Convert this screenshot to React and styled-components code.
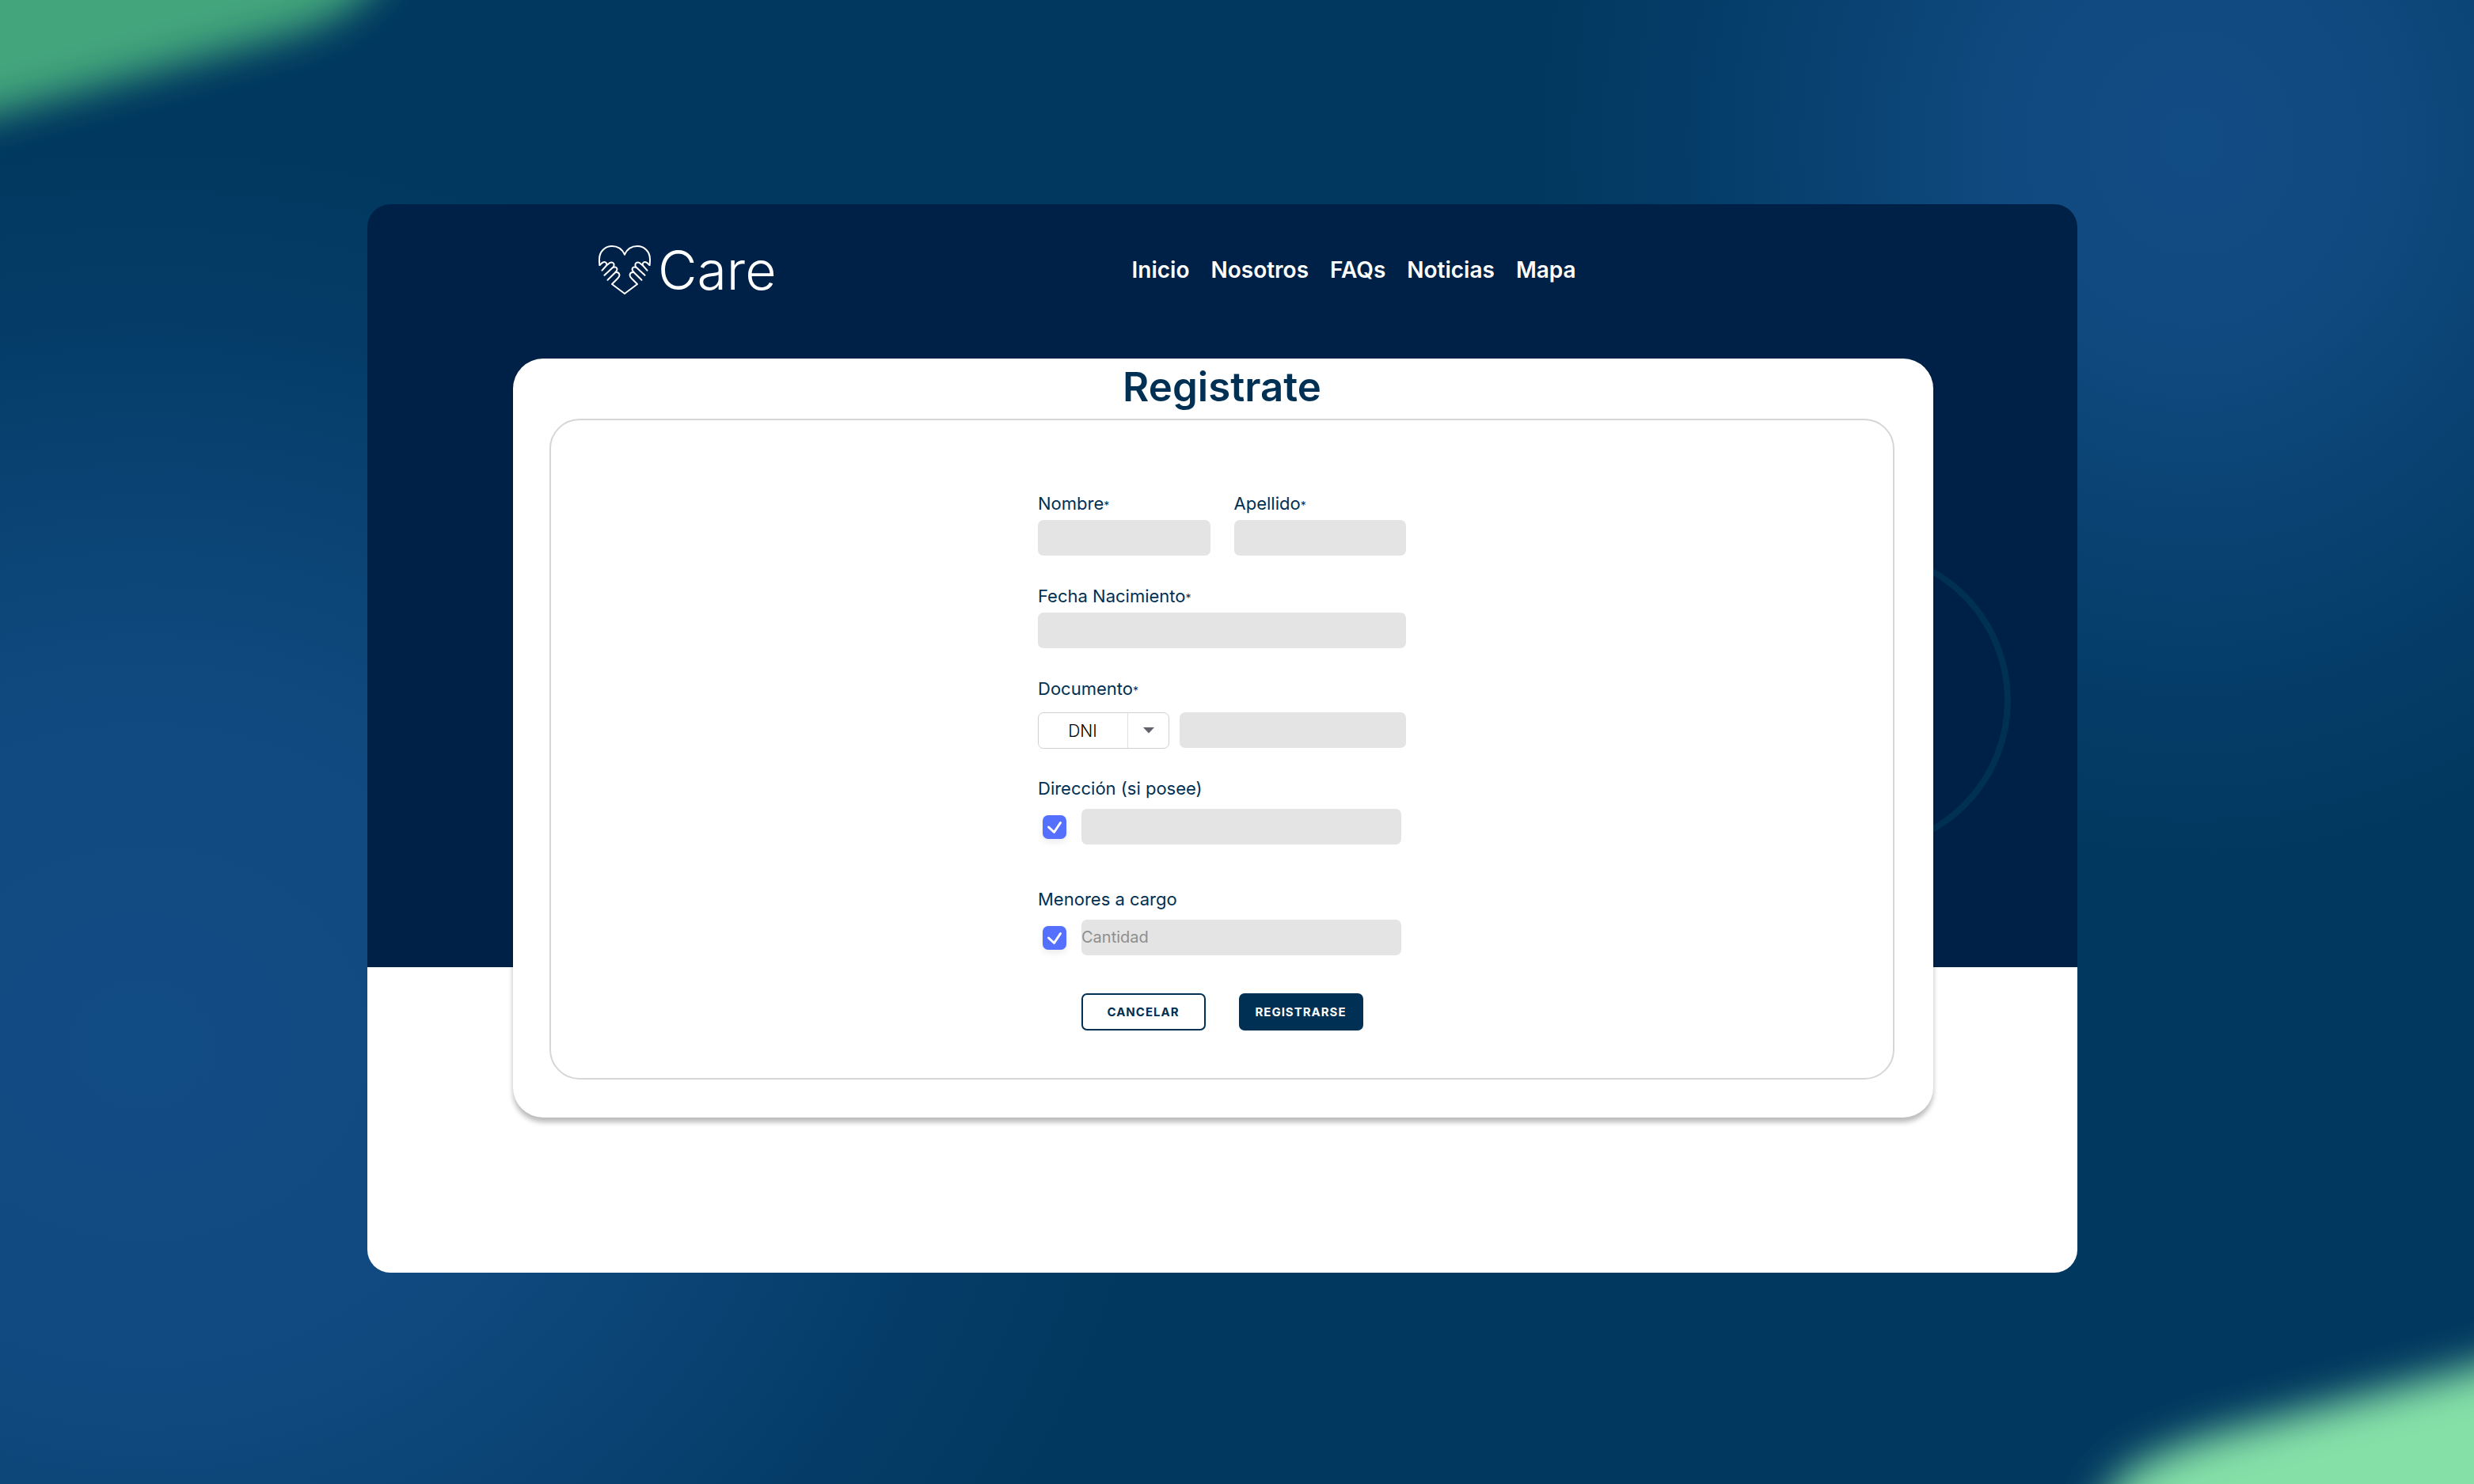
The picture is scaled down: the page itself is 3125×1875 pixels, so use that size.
import React, { useState } from "react";
import styled, { createGlobalStyle } from "styled-components";

const navy = "#003053";
const sans = `Inter, "Liberation Sans", sans-serif`;

const GlobalStyle = createGlobalStyle`
  *, *::before, *::after { box-sizing: border-box; }
  body { margin: 0; font-family: ${sans}; color: ${navy}; }
  button, input, select { font-family: inherit; }
`;

const Page = styled.div`
  position: relative;
  isolation: isolate;
  overflow: hidden;
  display: flex;
  min-height: 100vh;
  padding: 258px 501px 267px 464px;
  background:
    radial-gradient(ellipse 840px 920px at calc(100% - 355px) 180px, #124c84 0, #114b82f0 25%, #114b8299 50%, #114b8233 80%, #114b8200 100%),
    radial-gradient(ellipse 1300px 1150px at 180px 1320px, #124c84 0, #114b82f0 35%, #114b8299 60%, #114b8233 82%, #114b8200 100%),
    #00385f;
`;

const Glow = styled.svg`
  position: absolute;
  z-index: -1;
  ${(p) => (p.$corner === "top" ? "top: 0; left: 0;" : "bottom: 0; right: 0;")}
`;

const Shell = styled.div`
  position: relative;
  flex: 1;
  overflow: hidden;
  border-radius: 29px;
  background: linear-gradient(#002147 964px, #fff 964px);
`;

const Ring = styled.div`
  position: absolute;
  top: 436px;
  right: 84px;
  width: 382px;
  height: 382px;
  border: 8px solid #003053;
  border-radius: 50%;
`;

const Header = styled.header`
  display: flex;
  align-items: center;
  gap: 449px;
  height: 195px;
  padding: 0 0 30px 291px;
`;

const Brand = styled.a`
  display: flex;
  align-items: center;
  gap: 8px;
  color: #fff;
  font-size: 68px;
  font-weight: 300;
  line-height: 72px;
  text-decoration: none;
`;

const Nav = styled.nav`
  display: flex;
  gap: 27px;
`;

const NavLink = styled.a`
  color: #fff;
  font-size: 28px;
  font-weight: 600;
  line-height: 40px;
  text-decoration: none;
`;

const Card = styled.main`
  position: relative;
  margin: 0 182px 0 184px;
  padding: 0 49px 48px 46px;
  border-radius: 38px;
  background: #fff;
  box-shadow: 0 6px 6px rgba(0, 0, 0, 0.27);
`;

const Title = styled.h1`
  margin: 0;
  padding-bottom: 4px;
  font-size: 51px;
  font-weight: 600;
  line-height: 72px;
  text-align: center;
`;

const Panel = styled.div`
  display: flex;
  justify-content: center;
  padding: 90px 0 60px;
  border: 2px solid #d6d6d6;
  border-radius: 38px;
`;

const Form = styled.form`
  display: flex;
  flex-direction: column;
  gap: 36px;
  width: 465px;
`;

const Columns = styled.div`
  display: grid;
  grid-template-columns: 1fr 1fr;
  gap: 30px;
`;

const Field = styled.div`
  display: flex;
  flex-direction: column;
  gap: ${(p) => p.$gap || 6}px;
  ${(p) => p.$spaced && "padding-top: 18px;"}
`;

const Label = styled.label`
  font-size: 22px;
  line-height: 30px;
`;

const Star = styled.span`
  font-size: 14px;
  line-height: 1;
`;

const TextInput = styled.input`
  flex: 1;
  width: 100%;
  min-width: 0;
  min-height: 45px;
  padding: 0 0 2px;
  border: 0;
  border-radius: 7px;
  background: #e4e4e4;
  color: ${navy};
  font-size: 20px;
  &::placeholder { color: #8e8e8e; opacity: 1; }
`;

const Inline = styled.div`
  display: flex;
  align-items: center;
  gap: ${(p) => p.$gap}px;
  height: 45px;
  ${(p) => p.$inset && "padding: 0 6px;"}
`;

const SelectBox = styled.div`
  display: grid;
  grid-template-columns: 113px 53px;
  width: 166px;
  height: 46px;
`;

const Select = styled.select`
  grid-area: 1 / 1 / 2 / 3;
  appearance: none;
  padding: 2px 53px 0 0;
  border: 1px solid #d0d0d0;
  border-radius: 7px;
  background: #fff;
  color: #000;
  font-size: 21px;
  font-weight: 300;
  text-align: center;
  text-align-last: center;
`;

const Arrow = styled.span`
  grid-area: 1 / 2;
  display: flex;
  align-items: center;
  justify-content: center;
  margin: 1px 0;
  border-left: 1px solid #e0e0e0;
  pointer-events: none;
`;

const Tick = styled.span`
  display: grid;
  flex: none;
  width: 30px;
  height: 30px;
  border-radius: 7px;
  background: #5570ff;
  box-shadow: 0 4px 8px rgba(0, 0, 0, 0.08);
  & > * { grid-area: 1 / 1; }
`;

const TickInput = styled.input`
  appearance: none;
  width: 30px;
  height: 30px;
  margin: 0;
  border-radius: 7px;
  &:not(:checked) { background: #e4e4e4; }
  &:not(:checked) + svg { visibility: hidden; }
`;

const TickMark = styled.svg`
  pointer-events: none;
`;

const Actions = styled.div`
  display: flex;
  justify-content: center;
  gap: 42px;
  padding-top: 12px;
`;

const Button = styled.button`
  width: 157px;
  height: 47px;
  padding: 0;
  border: 2px solid ${navy};
  border-radius: 7px;
  background: ${(p) => (p.$primary ? navy : "#fff")};
  color: ${(p) => (p.$primary ? "#fff" : navy)};
  font-size: 15px;
  font-weight: 700;
  letter-spacing: 1px;
`;

const links = ["Inicio", "Nosotros", "FAQs", "Noticias", "Mapa"];

function HeartHalf() {
  return (
    <>
      <path d="M34 12.500C31 6 25 2 18 2C9 2 2 9 2 18.500C2 21.500 2 24 2.500 26" />
      <path d="M2.500 26L6 22.800Q9 21 11 23.500Q12 25 10.500 27L5.500 32.700" />
      <path d="M11 26.500L15 23.200Q18.500 21.500 20.500 24.500Q21 27 19.500 28.500L8.500 38.700" />
      <path d="M19.500 28.800Q23.500 27.500 24.500 31Q24.500 33 22.500 35L12.500 44.700" />
      <path d="M22.500 35Q27 34.500 27.500 38.500Q27.500 40.500 25 43L18 50L34 62" />
    </>
  );
}

function HeartLogo() {
  return (
    <svg width="68" height="64" viewBox="0 0 68 64" fill="none" stroke="#fff" strokeWidth="2" strokeLinecap="round" strokeLinejoin="round" aria-hidden="true">
      <HeartHalf />
      <g transform="translate(68 0) scale(-1 1)">
        <HeartHalf />
      </g>
    </svg>
  );
}

function CheckBox({ id, label }) {
  const [on, setOn] = useState(true);
  return (
    <Tick>
      <TickInput id={id} type="checkbox" aria-label={label} checked={on} onChange={(e) => setOn(e.target.checked)} />
      <TickMark width="30" height="30" viewBox="0 0 30 30" fill="none" stroke="#fff" strokeWidth="3" strokeLinecap="round" strokeLinejoin="round">
        <path d="M7.500 15L14.500 21.500L22.500 9.500" />
      </TickMark>
    </Tick>
  );
}

export default function App() {
  return (
    <Page>
      <GlobalStyle />
      <Glow $corner="top" width="640" height="320" viewBox="0 0 640 320" aria-hidden="true">
        <defs>
          <filter id="softTop" x="-50%" y="-50%" width="200%" height="200%"><feGaussianBlur stdDeviation="25" /></filter>
        </defs>
        <path d="M-200 -200L-200 200L0 143L370 43Q440 22 475 -20L555 -200Z" fill="#43a57c" filter="url(#softTop)" />
      </Glow>
      <Glow $corner="bottom" width="640" height="320" viewBox="0 0 640 320" aria-hidden="true">
        <defs>
          <filter id="softBottom" x="-50%" y="-50%" width="200%" height="200%"><feGaussianBlur stdDeviation="26" /></filter>
        </defs>
        <path d="M840 118L640 173L325 254Q210 286 182 326L100 520L840 520Z" fill="#84e0a7" filter="url(#softBottom)" />
      </Glow>
      <Shell>
        <Ring />
        <Header>
          <Brand href="#inicio">
            <HeartLogo />
            Care
          </Brand>
          <Nav>
            {links.map((name) => (
              <NavLink key={name} href={`#${name.toLowerCase()}`}>{name}</NavLink>
            ))}
          </Nav>
        </Header>
        <Card>
          <Title>Registrate</Title>
          <Panel>
            <Form onSubmit={(e) => e.preventDefault()}>
              <Columns>
                <Field>
                  <Label htmlFor="nombre">Nombre<Star>*</Star></Label>
                  <TextInput id="nombre" />
                </Field>
                <Field>
                  <Label htmlFor="apellido">Apellido<Star>*</Star></Label>
                  <TextInput id="apellido" />
                </Field>
              </Columns>
              <Field>
                <Label htmlFor="fecha">Fecha Nacimiento<Star>*</Star></Label>
                <TextInput id="fecha" />
              </Field>
              <Field $gap={15}>
                <Label htmlFor="documento">Documento<Star>*</Star></Label>
                <Inline $gap={13}>
                  <SelectBox>
                    <Select aria-label="Tipo de documento" defaultValue="DNI">
                      <option>DNI</option>
                    </Select>
                    <Arrow>
                      <svg width="16" height="8" viewBox="0 0 16 8" aria-hidden="true">
                        <path d="M1 0H15L8 7.500Z" fill="#62626c" />
                      </svg>
                    </Arrow>
                  </SelectBox>
                  <TextInput id="documento" />
                </Inline>
              </Field>
              <Field $gap={11}>
                <Label htmlFor="direccion">Dirección (si posee)</Label>
                <Inline $gap={19} $inset>
                  <CheckBox id="tiene-direccion" label="Posee dirección" />
                  <TextInput id="direccion" />
                </Inline>
              </Field>
              <Field $gap={11} $spaced>
                <Label htmlFor="menores">Menores a cargo</Label>
                <Inline $gap={19} $inset>
                  <CheckBox id="tiene-menores" label="Tiene menores a cargo" />
                  <TextInput id="menores" placeholder="Cantidad" />
                </Inline>
              </Field>
              <Actions>
                <Button type="button">CANCELAR</Button>
                <Button type="submit" $primary>REGISTRARSE</Button>
              </Actions>
            </Form>
          </Panel>
        </Card>
      </Shell>
    </Page>
  );
}
